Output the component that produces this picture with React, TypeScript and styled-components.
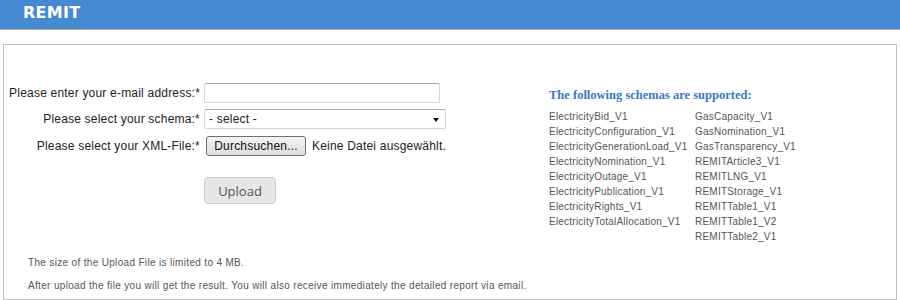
import React from "react";
import styled, { createGlobalStyle } from "styled-components";

const Global = createGlobalStyle`
  html, body { margin: 0; padding: 0; background: #fff; }
  body { font-family: "Liberation Sans", Arial, sans-serif; }
  * { box-sizing: border-box; }
`;

const Header = styled.header`
  height: 30px;
  background: #4589d0;
  border-bottom: 1px solid #a9a9a9;
  padding-left: 23px;
`;

const Title = styled.h1`
  margin: 0;
  font-family: "DejaVu Sans", Verdana, sans-serif;
  font-weight: bold;
  font-size: 16px;
  line-height: 26px;
  color: #fff;
  letter-spacing: 0.3px;
`;

const Box = styled.main`
  margin: 14px 3px 0;
  height: 256px;
  border: 1px solid #c0c0c0;
  display: flex;
  flex-direction: column;
`;

const MainRow = styled.div`
  display: flex;
  flex-shrink: 0;
  height: 211px;
`;

const Form = styled.form`
  width: 545px;
  padding-top: 38px;
  display: grid;
  grid-template-columns: 196px auto;
  grid-template-rows: 20px 20px 21px 42px;
  column-gap: 4px;
  row-gap: 6px;
  align-content: start;
  align-items: center;
`;

const Label = styled.label`
  justify-self: end;
  font-size: 12px;
  letter-spacing: 0.2px;
  color: #222;
  white-space: nowrap;
`;

const TextInput = styled.input`
  width: 236px;
  height: 20px;
  border: 1px solid #d3d8de;
  border-top-color: #a8a8a8;
  border-radius: 2px;
  padding: 0 4px;
  font: 12px "Liberation Sans", Arial, sans-serif;
  outline: none;
`;

const SelectBox = styled.div`
  position: relative;
  width: 242px;
  height: 20px;
  border: 1px solid #d3d8de;
  border-top-color: #a8a8a8;
  border-radius: 2px;
  padding-left: 4px;
  font-size: 12px;
  letter-spacing: 0.2px;
  line-height: 18px;
  color: #222;
`;

const Arrow = styled.span`
  position: absolute;
  right: 6px;
  top: 8px;
  width: 0;
  height: 0;
  border-left: 3.5px solid transparent;
  border-right: 3.5px solid transparent;
  border-top: 4px solid #111;
`;

const FileRow = styled.div`
  display: flex;
  align-items: center;
  gap: 6px;
  padding-left: 2px;
  font-size: 12px;
  letter-spacing: 0.2px;
  color: #222;
`;

const FileButton = styled.button`
  width: 100px;
  height: 20px;
  padding: 0;
  border: 1px solid #707070;
  border-radius: 3px;
  background: linear-gradient(#f4f4f4, #dcdcdc);
  font: 12px "Liberation Sans", Arial, sans-serif;
  letter-spacing: 0.2px;
  color: #111;
`;

const UploadCell = styled.div`
  grid-column: 2;
  align-self: end;
`;

const UploadButton = styled.button`
  display: block;
  width: 72px;
  height: 27px;
  padding: 0;
  border: 1px solid #cfcfcf;
  border-radius: 4px;
  background: #e6e6e6;
  font: 13px "Open Sans", sans-serif;
  color: #555;
`;

const Schemas = styled.section`
  padding-top: 43px;
`;

const SchemasTitle = styled.h2`
  margin: 0 0 6px;
  font-family: "Liberation Serif", "Times New Roman", serif;
  font-weight: bold;
  font-size: 12.5px;
  line-height: 15px;
  color: #3a78c3;
`;

const SchemaGrid = styled.div`
  display: grid;
  grid-template-columns: 146px auto;
`;

const SchemaColumn = styled.ul`
  margin: 0;
  padding: 0;
  list-style: none;
`;

const SchemaItem = styled.li`
  font-size: 10px;
  letter-spacing: 0.22px;
  line-height: 15px;
  color: #555;
  white-space: nowrap;
`;

const Notes = styled.div`
  padding-left: 24px;
  display: flex;
  flex-direction: column;
  gap: 9px;
`;

const Note = styled.p`
  margin: 0;
  font-size: 10px;
  letter-spacing: 0.33px;
  line-height: 14px;
  color: #555;
`;

const col1 = [
  "ElectricityBid_V1",
  "ElectricityConfiguration_V1",
  "ElectricityGenerationLoad_V1",
  "ElectricityNomination_V1",
  "ElectricityOutage_V1",
  "ElectricityPublication_V1",
  "ElectricityRights_V1",
  "ElectricityTotalAllocation_V1",
];

const col2 = [
  "GasCapacity_V1",
  "GasNomination_V1",
  "GasTransparency_V1",
  "REMITArticle3_V1",
  "REMITLNG_V1",
  "REMITStorage_V1",
  "REMITTable1_V1",
  "REMITTable1_V2",
  "REMITTable2_V1",
];

export default function App() {
  return (
    <>
      <Global />
      <Header>
        <Title>REMIT</Title>
      </Header>
      <Box>
        <MainRow>
          <Form onSubmit={(e) => e.preventDefault()}>
            <Label>Please enter your e-mail address:*</Label>
            <TextInput type="text" />
            <Label>Please select your schema:*</Label>
            <SelectBox>
              - select -
              <Arrow />
            </SelectBox>
            <Label>Please select your XML-File:*</Label>
            <FileRow>
              <FileButton type="button">Durchsuchen...</FileButton>
              <span>Keine Datei ausgewählt.</span>
            </FileRow>
            <UploadCell>
              <UploadButton type="submit">Upload</UploadButton>
            </UploadCell>
          </Form>
          <Schemas>
            <SchemasTitle>The following schemas are supported:</SchemasTitle>
            <SchemaGrid>
              <SchemaColumn>
                {col1.map((s) => (
                  <SchemaItem key={s}>{s}</SchemaItem>
                ))}
              </SchemaColumn>
              <SchemaColumn>
                {col2.map((s) => (
                  <SchemaItem key={s}>{s}</SchemaItem>
                ))}
              </SchemaColumn>
            </SchemaGrid>
          </Schemas>
        </MainRow>
        <Notes>
          <Note>The size of the Upload File is limited to 4 MB.</Note>
          <Note>
            After upload the file you will get the result. You will also receive immediately the detailed report via email.
          </Note>
        </Notes>
      </Box>
    </>
  );
}
